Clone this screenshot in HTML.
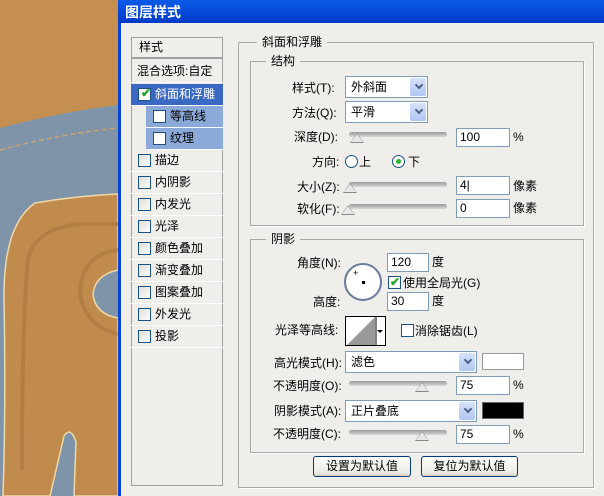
<!DOCTYPE html>
<html><head><meta charset="utf-8"><style>
*{margin:0;padding:0;box-sizing:border-box}
body{width:604px;height:496px;overflow:hidden;position:relative;background:#efeeeb;font-family:"Liberation Sans","Noto Sans CJK SC",sans-serif;font-size:12px;color:#000}
.a{position:absolute;white-space:nowrap;line-height:14px}
.fs{position:absolute;border:1px solid #a8a8a8;box-shadow:1px 1px 0 #fff}
.lg{position:absolute;background:#efeeeb;padding:0 5px;line-height:14px;top:-8px}
.sel{position:absolute;background:#fff;border:1px solid #7f9db9;height:22px;padding-left:5px;line-height:20px}
.sel:after{content:"";position:absolute;right:1px;top:1px;width:16px;height:18px;background:linear-gradient(#d6e2fb,#b0c6f2);border-radius:2px}
.sel i{position:absolute;right:5px;top:5px;width:6px;height:6px;border-right:2px solid #4d6185;border-bottom:2px solid #4d6185;transform:rotate(45deg);z-index:1}
.inp{position:absolute;background:#fff;border:1px solid #7f9db9;height:19px;width:54px;padding-left:3px;line-height:17px}
.sl{position:absolute;height:5px;width:98px;border-radius:3px;background:linear-gradient(#9a9a9a,#d8d8d8)}
.th{position:absolute;top:1px;width:0;height:0;border-left:7px solid transparent;border-right:7px solid transparent;border-bottom:10px solid #888}
.th:after{content:"";position:absolute;left:-6px;top:1px;border-left:6px solid transparent;border-right:6px solid transparent;border-bottom:8px solid #e8e8e8}
.cb{position:absolute;width:13px;height:13px;border:1px solid #1c5180;background:linear-gradient(135deg,#dcdcd6,#fff)}
.row{position:absolute;left:131px;width:92px;height:22px;border-bottom:1px solid #fff;line-height:21px}
.row .cb{left:7px;top:4px}
.row span{position:absolute;left:24px}
.btn{position:absolute;height:21px;border:1px solid #003c74;border-radius:3px;background:linear-gradient(#fff,#ecebe6 80%,#d6d0c5);text-align:center;line-height:19px}
</style></head><body>
<svg class="a" style="left:0;top:0" width="118" height="496" viewBox="0 0 118 496">
<rect width="118" height="496" fill="#7f93a9"/>
<path d="M0 0 H118 V105 Q60 112 0 128Z" fill="#c5904f"/>
<path d="M0 150 Q60 134 118 128" stroke="#c8a575" stroke-width="1.5" fill="none" stroke-dasharray="5 3"/>
<path d="M3 496 Q6 400 4 300 Q3 225 35 203 Q75 196 118 194 V270 Q95 275 93 294 Q95 314 118 318 V496 H74 L76 442 Q71 426 64 436 L50 496Z" fill="#c08b4d" stroke="#f0d8a8" stroke-width="1.5"/>
<path d="M22 470 Q22 320 28 260 Q35 228 80 224 H118" stroke="#a87640" stroke-width="4" fill="none" opacity=".6"/>
<path d="M118 250 Q82 254 80 292 Q84 326 118 334" stroke="#a87640" stroke-width="4" fill="none" opacity=".6"/>
</svg>
<div class="a" style="left:118px;top:0;width:486px;height:496px;background:#efeeeb;border-left:3px solid #0842d6"></div>
<div class="a" style="left:118px;top:0;width:486px;height:23px;background:linear-gradient(#0a5ae8,#0547d8 60%,#0039c4)"></div>
<div class="a" style="left:125px;top:4px;color:#fff;font-weight:bold;font-size:14px;line-height:16px">图层样式</div>

<div class="a" style="left:131px;top:37px;width:92px;height:449px;border:1px solid #a0a0a0;background:#efeeeb"></div>
<div class="row" style="top:37px;border-bottom:2px solid #a0a0a0"><span style="left:8px">样式</span></div>
<div class="row" style="top:61px"><span style="left:6px">混合选项:自定</span></div>
<div class="row" style="top:84px;background:#3969c2;color:#fff"><div class="cb" style="background:#fff"></div><b style="position:absolute;left:10px;top:-1px;color:#22a32a;font-size:12px">✔</b><span>斜面和浮雕</span></div>
<div class="row" style="top:106px;left:146px;width:77px;background:#8caad9"><div class="cb" style="background:#fff"></div><span>等高线</span></div>
<div class="row" style="top:128px;left:146px;width:77px;background:#8caad9"><div class="cb" style="background:#fff"></div><span>纹理</span></div>
<div class="row" style="top:150px"><div class="cb"></div><span>描边</span></div>
<div class="row" style="top:172px"><div class="cb"></div><span>内阴影</span></div>
<div class="row" style="top:194px"><div class="cb"></div><span>内发光</span></div>
<div class="row" style="top:216px"><div class="cb"></div><span>光泽</span></div>
<div class="row" style="top:238px"><div class="cb"></div><span>颜色叠加</span></div>
<div class="row" style="top:260px"><div class="cb"></div><span>渐变叠加</span></div>
<div class="row" style="top:282px"><div class="cb"></div><span>图案叠加</span></div>
<div class="row" style="top:304px"><div class="cb"></div><span>外发光</span></div>
<div class="row" style="top:326px"><div class="cb"></div><span>投影</span></div>

<div class="fs" style="left:238px;top:42px;width:356px;height:446px"><div class="lg" style="left:18px">斜面和浮雕</div></div>
<div class="fs" style="left:250px;top:61px;width:334px;height:165px"><div class="lg" style="left:15px">结构</div></div>
<div class="a" style="left:292px;top:81px">样式(T):</div>
<div class="sel" style="left:345px;top:76px;width:83px">外斜面<i></i></div>
<div class="a" style="left:292px;top:106px">方法(Q):</div>
<div class="sel" style="left:345px;top:101px;width:83px">平滑<i></i></div>
<div class="a" style="left:294px;top:130px">深度(D):</div>
<div class="sl" style="left:349px;top:132px"><div class="th" style="left:1px"></div></div>
<div class="inp" style="left:456px;top:128px">100</div><div class="a" style="left:513px;top:130px">%</div>
<div class="a" style="left:312px;top:155px">方向:</div>
<div class="a" style="left:345px;top:155px;width:13px;height:13px;border:1px solid #1c5180;border-radius:50%;background:#fff"></div>
<div class="a" style="left:359px;top:155px">上</div>
<div class="a" style="left:392px;top:155px;width:13px;height:13px;border:1px solid #1c5180;border-radius:50%;background:#fff"><div style="position:absolute;left:3px;top:3px;width:5px;height:5px;border-radius:50%;background:#2bb52b"></div></div>
<div class="a" style="left:408px;top:155px">下</div>
<div class="a" style="left:297px;top:180px">大小(Z):</div>
<div class="sl" style="left:349px;top:182px"><div class="th" style="left:-6px"></div></div>
<div class="inp" style="left:456px;top:176px">4|</div><div class="a" style="left:513px;top:179px">像素</div>
<div class="a" style="left:297px;top:202px">软化(F):</div>
<div class="sl" style="left:349px;top:204px"><div class="th" style="left:-8px"></div></div>
<div class="inp" style="left:456px;top:199px">0</div><div class="a" style="left:513px;top:201px">像素</div>

<div class="fs" style="left:250px;top:239px;width:334px;height:214px"><div class="lg" style="left:15px">阴影</div></div>
<div class="a" style="left:297px;top:256px">角度(N):</div>
<div class="inp" style="left:387px;top:253px;width:42px">120</div><div class="a" style="left:432px;top:255px">度</div>
<div class="a" style="left:344px;top:263px;width:38px;height:38px;border:2px solid #6a7a9c;border-radius:50%;background:#fff"><div style="position:absolute;left:16px;top:16px;width:3px;height:3px;background:#000"></div><div style="position:absolute;left:7px;top:4px;font-size:9px;line-height:9px">+</div></div>
<div class="cb" style="left:388px;top:276px;background:#fff"></div><b class="a" style="left:390px;top:275px;color:#22a32a">✔</b>
<div class="a" style="left:403px;top:276px">使用全局光(G)</div>
<div class="a" style="left:313px;top:295px">高度:</div>
<div class="inp" style="left:387px;top:292px;width:42px">30</div><div class="a" style="left:432px;top:294px">度</div>
<div class="a" style="left:275px;top:323px">光泽等高线:</div>
<div class="a" style="left:345px;top:316px;width:41px;height:30px;border:1px solid #000;background:#fff;overflow:hidden">
<svg width="41" height="30" style="position:absolute;left:0;top:0"><polygon points="0,29 29,0 29,29" fill="#999"/><polygon points="31,13 37,13 34,16" fill="#000"/><line x1="30" y1="0" x2="30" y2="30" stroke="#000"/></svg></div>
<div class="cb" style="left:401px;top:324px;background:#fff"></div>
<div class="a" style="left:415px;top:324px">消除锯齿(L)</div>
<div class="a" style="left:274px;top:356px">高光模式(H):</div>
<div class="sel" style="left:345px;top:351px;width:132px">滤色<i></i></div>
<div class="a" style="left:482px;top:353px;width:42px;height:17px;border:1px solid #999;background:#fff"></div>
<div class="a" style="left:273px;top:379px">不透明度(O):</div>
<div class="sl" style="left:349px;top:381px"><div class="th" style="left:66px"></div></div>
<div class="inp" style="left:456px;top:376px">75</div><div class="a" style="left:513px;top:378px">%</div>
<div class="a" style="left:274px;top:404px">阴影模式(A):</div>
<div class="sel" style="left:345px;top:400px;width:132px">正片叠底<i></i></div>
<div class="a" style="left:482px;top:402px;width:42px;height:17px;border:1px solid #666;background:#000"></div>
<div class="a" style="left:273px;top:427px">不透明度(C):</div>
<div class="sl" style="left:349px;top:430px"><div class="th" style="left:66px"></div></div>
<div class="inp" style="left:456px;top:425px">75</div><div class="a" style="left:513px;top:427px">%</div>

<div class="btn" style="left:313px;top:456px;width:98px">设置为默认值</div>
<div class="btn" style="left:421px;top:456px;width:97px">复位为默认值</div>
</body></html>
